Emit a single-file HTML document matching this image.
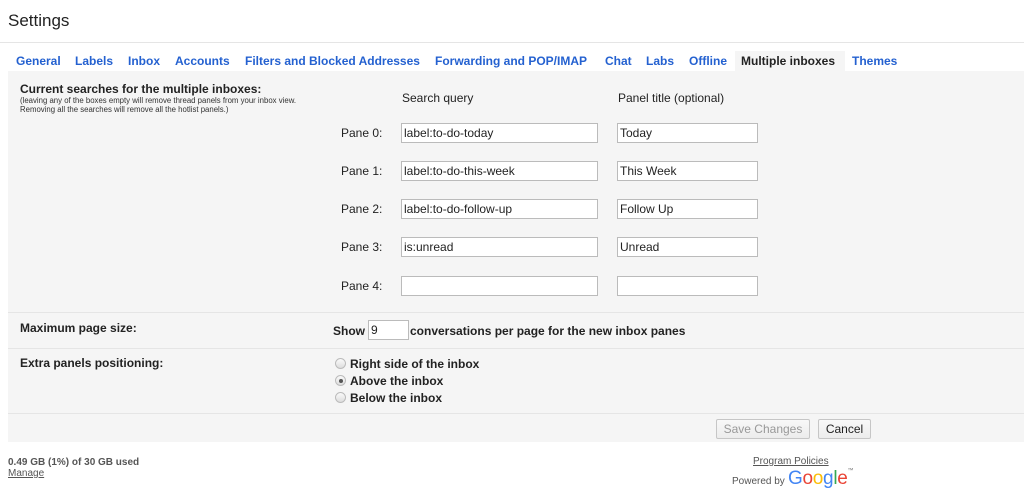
<!DOCTYPE html>
<html><head><style>
*{margin:0;padding:0;box-sizing:border-box}
body{width:1024px;height:497px;background:#fff;font-family:"Liberation Sans",Arial,sans-serif;font-size:12px;color:#222;position:relative;overflow:hidden}
.a{position:absolute;white-space:nowrap}
.t{font-size:12px;font-weight:bold;color:#2461d0;top:54px}
.in{position:absolute;height:20px;border:1px solid #bbb;background:#fff;font-size:12px;padding:2px 2px;color:#222;width:197px}
.in2{width:141px}
.lbl{position:absolute;font-size:12px;left:341px}
.hr{position:absolute;left:8px;right:0;height:1px;background:#e5e5e5}
.b{font-weight:bold;font-size:12px}
.r{position:absolute;width:11px;height:11px;border-radius:50%;border:1px solid #bbb;background:linear-gradient(#fafafa,#ddd);left:335px}
.btn{position:absolute;height:20px;border:1px solid #c6c6c6;border-radius:2px;background:linear-gradient(#f8f8f8,#ececec);font-size:12px;text-align:center;line-height:18px}
</style></head><body>
<div class="a" style="left:8px;top:11px;font-size:17px;color:#222">Settings</div>
<div style="position:absolute;left:0;right:0;top:42px;height:1px;background:#e5e5e5"></div>
<div class="a t" style="left:16px">General</div>
<div class="a t" style="left:75px">Labels</div>
<div class="a t" style="left:128px">Inbox</div>
<div class="a t" style="left:175px">Accounts</div>
<div class="a t" style="left:245px">Filters and Blocked Addresses</div>
<div class="a t" style="left:435px">Forwarding and POP/IMAP</div>
<div class="a t" style="left:605px">Chat</div>
<div class="a t" style="left:646px">Labs</div>
<div class="a t" style="left:689px">Offline</div>
<div style="position:absolute;left:735px;top:51px;width:110px;height:20px;background:#f5f5f5"></div>
<div class="a t" style="left:741px;color:#222">Multiple inboxes</div>
<div class="a t" style="left:852px">Themes</div>
<div style="position:absolute;left:8px;right:0;top:71px;height:371px;background:#f5f5f5"></div>
<div class="a" style="left:20px;top:82px;font-weight:bold;font-size:12px">Current searches for the multiple inboxes:</div>
<div class="a" style="left:20px;top:96px;font-size:7.8px;line-height:9px;color:#333">(leaving any of the boxes empty will remove thread panels from your inbox view.<br>Removing all the searches will remove all the hotlist panels.)</div>
<div class="a" style="left:402px;top:91px">Search query</div>
<div class="a" style="left:618px;top:91px">Panel title (optional)</div>
<div class="lbl" style="top:126px">Pane 0:</div>
<div class="in" style="left:401px;top:123px">label:to-do-today</div>
<div class="in in2" style="left:617px;top:123px">Today</div>
<div class="lbl" style="top:164px">Pane 1:</div>
<div class="in" style="left:401px;top:161px">label:to-do-this-week</div>
<div class="in in2" style="left:617px;top:161px">This Week</div>
<div class="lbl" style="top:202px">Pane 2:</div>
<div class="in" style="left:401px;top:199px">label:to-do-follow-up</div>
<div class="in in2" style="left:617px;top:199px">Follow Up</div>
<div class="lbl" style="top:240px">Pane 3:</div>
<div class="in" style="left:401px;top:237px">is:unread</div>
<div class="in in2" style="left:617px;top:237px">Unread</div>
<div class="lbl" style="top:279px">Pane 4:</div>
<div class="in" style="left:401px;top:276px"></div>
<div class="in in2" style="left:617px;top:276px"></div>
<div class="hr" style="top:312px"></div>
<div class="a b" style="left:20px;top:321px">Maximum page size:</div>
<div class="a b" style="left:333px;top:324px">Show</div>
<div class="in" style="left:368px;top:320px;width:41px">9</div>
<div class="a b" style="left:410px;top:324px">conversations per page for the new inbox panes</div>
<div class="hr" style="top:348px"></div>
<div class="a b" style="left:20px;top:356px">Extra panels positioning:</div>
<div class="r" style="top:358px"></div>
<div class="a b" style="left:350px;top:357px">Right side of the inbox</div>
<div class="r" style="top:375px"></div><div style="position:absolute;left:339px;top:379px;width:4px;height:4px;border-radius:50%;background:#555"></div>
<div class="a b" style="left:350px;top:374px">Above the inbox</div>
<div class="r" style="top:392px"></div>
<div class="a b" style="left:350px;top:391px">Below the inbox</div>
<div class="hr" style="top:413px"></div>
<div class="btn" style="left:716px;top:419px;width:94px;color:#999">Save Changes</div>
<div class="btn" style="left:818px;top:419px;width:53px;color:#222">Cancel</div>
<div class="a" style="left:8px;top:457px;font-size:10px;font-weight:bold;color:#555">0.49 GB (1%) of 30 GB used</div>
<div class="a" style="left:8px;top:468px;font-size:10px;color:#555;text-decoration:underline">Manage</div>
<div class="a" style="left:753px;top:456px;font-size:10px;color:#555;text-decoration:underline">Program Policies</div>
<div class="a" style="left:732px;top:476px;font-size:10px;color:#555">Powered by</div>
<div class="a" style="left:788px;top:468px;font-size:19px;letter-spacing:-0.3px"><span style="color:#4285f4">G</span><span style="color:#ea4335">o</span><span style="color:#fbbc05">o</span><span style="color:#4285f4">g</span><span style="color:#34a853">l</span><span style="color:#ea4335">e</span><span style="font-size:6px;color:#777;vertical-align:top">™</span></div>
</body></html>
